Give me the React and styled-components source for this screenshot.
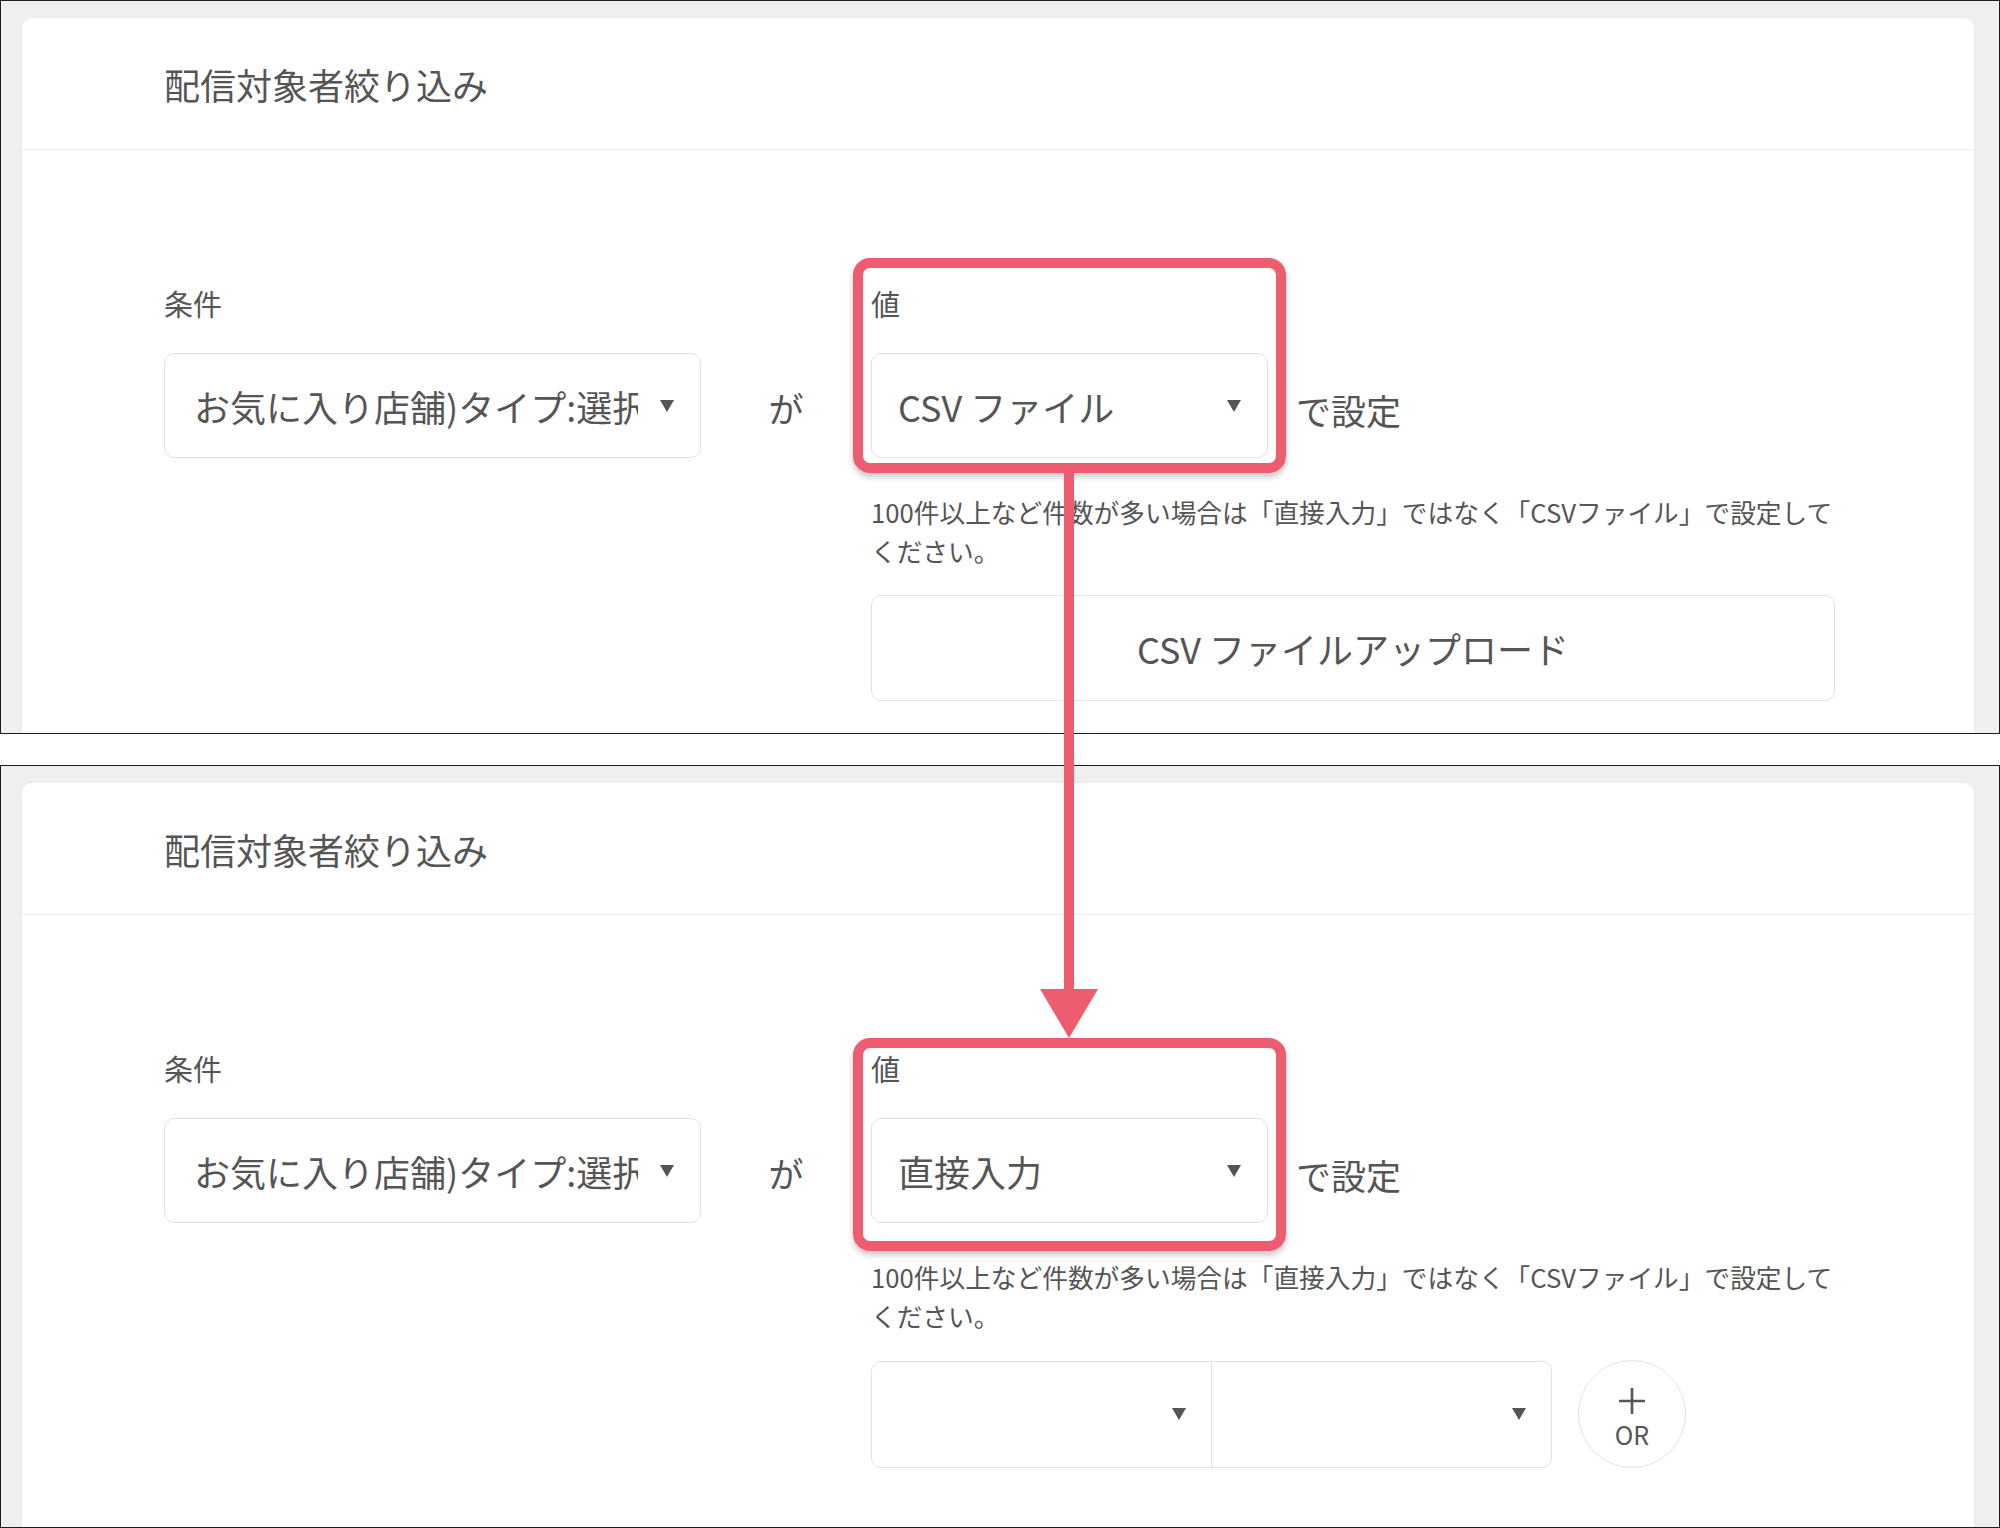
import React from "react";
import styled, { createGlobalStyle } from "styled-components";

const GlobalStyle = createGlobalStyle`
  * { box-sizing: border-box; }
  body {
    margin: 0;
    background: #fff;
    font-family: "Noto Sans CJK JP", "Noto Sans", sans-serif;
    color: #555;
  }
`;

const Page = styled.div`
  position: relative;
  width: 2000px;
  display: flex;
  flex-direction: column;
  gap: 31px;
`;

const Frame = styled.div`
  height: ${({ $height }) => $height}px;
  border: 1px solid #1c1c1c;
  background: #efefef;
  padding: 17px 25px 0 21px;
  overflow: hidden;
`;

const Card = styled.div`
  height: 100%;
  background: #fff;
  border-radius: 10px 10px 0 0;
  box-shadow: 0 0 3px rgba(0, 0, 0, 0.04);
`;

const CardHeader = styled.div`
  height: 132px;
  display: flex;
  align-items: center;
  padding: 0 0 0 142px;
  border-bottom: 1.5px solid #ececec;
`;

const Title = styled.h2`
  margin: 0;
  font-size: 36px;
  font-weight: 400;
  color: #555;
`;

const CardBody = styled.div`
  padding: 133px 0 0 142px;
`;

const Row = styled.div`
  display: flex;
  align-items: flex-start;
`;

const CondCol = styled.div`
  width: 537px;
  flex-shrink: 0;
`;

const Label = styled.div`
  font-size: 29px;
  line-height: 40px;
  margin-bottom: 30px;
  color: #555;
`;

const Select = styled.div`
  height: 105px;
  width: ${({ $width }) => ($width ? `${$width}px` : "100%")};
  display: flex;
  align-items: center;
  gap: 22px;
  padding: 0 26px 0 ${({ $pl }) => $pl || 26}px;
  border: 1.5px solid #e2e2e2;
  border-radius: 10px;
  background: #fff;
`;

const SelectValue = styled.div`
  flex: 1;
  min-width: 0;
  overflow: hidden;
  white-space: nowrap;
  font-size: 36px;
  color: #555;
`;

const Caret = styled.span`
  width: 0;
  height: 0;
  flex-shrink: 0;
  border-left: 7.5px solid transparent;
  border-right: 7.5px solid transparent;
  border-top: 12px solid #555;
`;

const Joiner = styled.div`
  width: 170px;
  flex-shrink: 0;
  height: 105px;
  margin-top: 70px;
  padding-top: 4px;
  display: flex;
  align-items: center;
  justify-content: center;
  font-size: 35px;
`;

const ValueArea = styled.div`
  display: flex;
  flex-direction: column;
`;

const ValueRow = styled.div`
  display: flex;
  align-items: flex-end;
`;

const ValueCol = styled.div`
  position: relative;
  width: 397px;
`;

const Highlight = styled.div`
  position: absolute;
  left: -18px;
  right: -18px;
  top: ${({ $top }) => $top}px;
  bottom: ${({ $bottom }) => $bottom}px;
  border: 10px solid #ee5c6f;
  border-radius: 17px;
  box-shadow: 0 4px 6px rgba(0, 0, 0, 0.22);
  pointer-events: none;
  z-index: 2;
`;

const Suffix = styled.div`
  height: 105px;
  margin-left: 28px;
  padding-top: 8px;
  display: flex;
  align-items: center;
  font-size: 35px;
`;

const Help = styled.p`
  width: 990px;
  margin: 34px 0 0;
  font-size: 25.7px;
  line-height: 39px;
  color: #555;
`;

const UploadButton = styled.div`
  width: 964px;
  height: 106px;
  margin-top: 25px;
  display: flex;
  align-items: center;
  justify-content: center;
  border: 1.5px solid #e2e2e2;
  border-radius: 10px;
  font-size: 36px;
  color: #555;
`;

const PairRow = styled.div`
  display: flex;
  align-items: center;
  gap: 26px;
  margin-top: 25px;
`;

const Pair = styled.div`
  width: 681px;
  height: 107px;
  display: flex;
  border: 1.5px solid #e2e2e2;
  border-radius: 10px;
  overflow: hidden;
`;

const PairHalf = styled.div`
  flex: 1;
  display: flex;
  align-items: center;
  justify-content: flex-end;
  padding-right: 25px;

  & + & {
    border-left: 1.5px solid #e2e2e2;
  }
`;

const OrButton = styled.div`
  width: 108px;
  height: 108px;
  border-radius: 50%;
  border: 1.5px solid #e2e2e2;
  display: flex;
  flex-direction: column;
  align-items: center;
  justify-content: center;
  gap: 5px;
  padding-top: 6px;
  font-size: 25px;
  line-height: 28px;
  color: #555;
`;

const Arrow = styled.svg`
  position: absolute;
  left: 1040px;
  top: 470px;
  z-index: 3;
`;

const PlusIcon = () => (
  <svg width="28" height="28" viewBox="0 0 28 28">
    <path d="M14 1v26M1 14h26" stroke="#555" strokeWidth="2.6" fill="none" />
  </svg>
);

function Panel({ height, value, hl, children }) {
  return (
    <Frame $height={height}>
      <Card>
        <CardHeader>
          <Title>配信対象者絞り込み</Title>
        </CardHeader>
        <CardBody>
          <Row>
            <CondCol>
              <Label>条件</Label>
              <Select $pl={29}>
                <SelectValue>お気に入り店舗)タイプ:選択</SelectValue>
                <Caret />
              </Select>
            </CondCol>
            <Joiner>が</Joiner>
            <ValueArea>
              <ValueRow>
                <ValueCol>
                  <Highlight $top={hl[0]} $bottom={hl[1]} />
                  <Label>値</Label>
                  <Select>
                    <SelectValue>{value}</SelectValue>
                    <Caret />
                  </Select>
                </ValueCol>
                <Suffix>で設定</Suffix>
              </ValueRow>
              <Help>
                100件以上など件数が多い場合は「直接入力」ではなく「CSVファイル」で設定して
                <br />
                ください。
              </Help>
              {children}
            </ValueArea>
          </Row>
        </CardBody>
      </Card>
    </Frame>
  );
}

export default function App() {
  return (
    <>
      <GlobalStyle />
      <Page>
        <Panel height={734} value="CSV ファイル" hl={[-25, -15]}>
          <UploadButton>CSV ファイルアップロード</UploadButton>
        </Panel>
        <Panel height={763} value="直接入力" hl={[-10, -28]}>
          <PairRow>
            <Pair>
              <PairHalf>
                <Caret />
              </PairHalf>
              <PairHalf>
                <Caret />
              </PairHalf>
            </Pair>
            <OrButton>
              <PlusIcon />
              <span>OR</span>
            </OrButton>
          </PairRow>
        </Panel>
        <Arrow width="58" height="570" viewBox="0 0 58 570">
          <rect x="24" y="3" width="10" height="518" fill="#ee5c6f" />
          <polygon points="0,519 58,519 29,568" fill="#ee5c6f" />
        </Arrow>
      </Page>
    </>
  );
}
